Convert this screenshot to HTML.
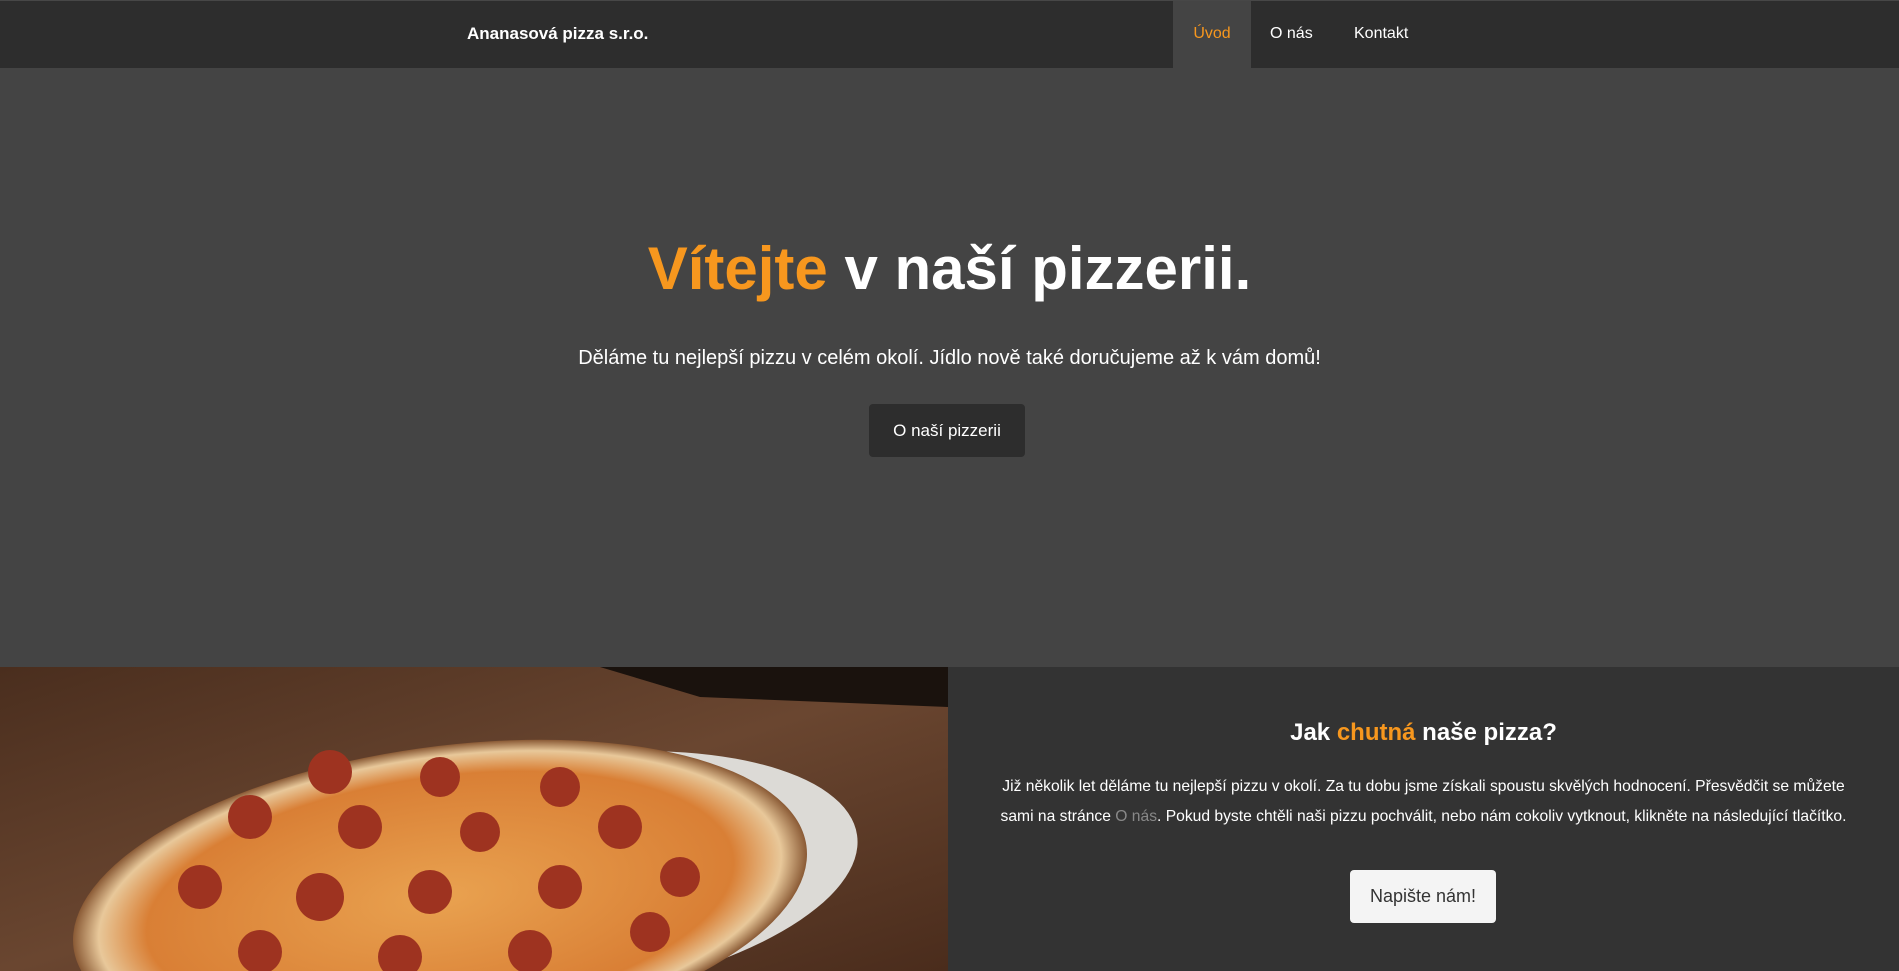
<!DOCTYPE html>
<html style="overflow:hidden"><head><meta charset="utf-8"><style>
*{margin:0;padding:0;box-sizing:border-box}
body{width:1899px;height:971px;overflow:hidden;background:#444;font-family:"Liberation Sans",Arial,sans-serif;color:#fff;position:relative}
.nav{position:absolute;top:0;left:0;width:1899px;height:68px;background:#2d2d2d;border-top:1px solid #474747}
.brand{position:absolute;left:467px;top:23px;font-weight:bold;font-size:17px}
.tab{position:absolute;top:0;height:67px;line-height:66px;font-size:16px}
.hero{position:absolute;top:68px;left:0;width:1899px;height:599px;background:#444;text-align:center}
h1{position:absolute;top:166px;width:100%;font-size:60px;font-weight:bold}
.o{color:#f7971e}
.lead{position:absolute;top:279px;width:100%;font-size:20px}
.btn1{position:absolute;left:869px;top:336px;width:156px;height:53px;background:#2d2d2d;border-radius:4px;line-height:53px;font-size:17px}
.img{position:absolute;left:0;top:667px;width:948px;height:304px;overflow:hidden}
.panel{position:absolute;left:948px;top:667px;width:951px;height:304px;background:#333;text-align:center;overflow:hidden}
h2{position:absolute;top:52px;width:100%;font-size:24px;font-weight:bold}
.p{position:absolute;top:105px;left:0;right:0;font-size:15.65px;line-height:30px;white-space:nowrap}
.btn2{position:absolute;left:402px;top:203px;width:146px;height:53px;background:#f4f4f4;color:#333;border-radius:4px;line-height:53px;font-size:18px}
</style></head><body>
<div class="nav">
<div class="brand">Ananasová pizza s.r.o.</div>
<div class="tab" style="left:1173px;width:78px;background:#444;text-align:center;color:#f7971e">Úvod</div>
<div class="tab" style="left:1270px">O nás</div>
<div class="tab" style="left:1354px">Kontakt</div>
</div>
<div class="hero">
<h1><span class="o">Vítejte</span> v naší pizzerii.</h1>
<div class="lead">Děláme tu nejlepší pizzu v celém okolí. Jídlo nově také doručujeme až k vám domů!</div>
<div class="btn1">O naší pizzerii</div>
</div>
<div class="img">
<svg width="948" height="304" viewBox="0 0 948 304">
<defs>
<linearGradient id="w" x1="0" y1="0" x2="1" y2="1"><stop offset="0" stop-color="#4a2e1e"/><stop offset=".5" stop-color="#6a4630"/><stop offset="1" stop-color="#4a2c1c"/></linearGradient>
<radialGradient id="pz" cx=".5" cy=".5" r=".5"><stop offset="0" stop-color="#e9a250"/><stop offset=".8" stop-color="#d97f35"/><stop offset=".93" stop-color="#e8c89a"/><stop offset="1" stop-color="#8a5a35"/></radialGradient>
</defs>
<rect width="948" height="304" fill="url(#w)"/>
<polygon points="600,0 948,0 948,40 700,30" fill="#1a120d"/>
<ellipse cx="560" cy="210" rx="300" ry="120" fill="#dcdad6" transform="rotate(-8 560 210)"/>
<ellipse cx="440" cy="230" rx="370" ry="150" fill="url(#pz)" transform="rotate(-8 440 230)"/>
<g fill="#9e3320">
<circle cx="330" cy="105" r="22"/><circle cx="440" cy="110" r="20"/><circle cx="560" cy="120" r="20"/><circle cx="250" cy="150" r="22"/>
<circle cx="360" cy="160" r="22"/><circle cx="480" cy="165" r="20"/><circle cx="620" cy="160" r="22"/><circle cx="200" cy="220" r="22"/>
<circle cx="320" cy="230" r="24"/><circle cx="430" cy="225" r="22"/><circle cx="560" cy="220" r="22"/><circle cx="680" cy="210" r="20"/>
<circle cx="260" cy="285" r="22"/><circle cx="400" cy="290" r="22"/><circle cx="530" cy="285" r="22"/><circle cx="650" cy="265" r="20"/>
</g>
</svg>
</div>
<div class="panel">
<h2>Jak <span class="o">chutná</span> naše pizza?</h2>
<div class="p">Již několik let děláme tu nejlepší pizzu v okolí. Za tu dobu jsme získali spoustu skvělých hodnocení. Přesvědčit se můžete<br>sami na stránce <span style="color:#888">O nás</span>. Pokud byste chtěli naši pizzu pochválit, nebo nám cokoliv vytknout, klikněte na následující tlačítko.</div>
<div class="btn2">Napište nám!</div>
</div>
</body></html>
